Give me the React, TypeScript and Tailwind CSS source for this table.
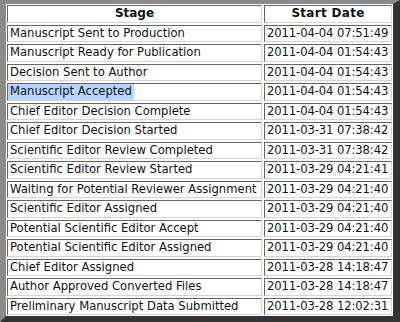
const rows: [string, string][] = [
  ["Manuscript Sent to Production", "2011-04-04 07:51:49"],
  ["Manuscript Ready for Publication", "2011-04-04 01:54:43"],
  ["Decision Sent to Author", "2011-04-04 01:54:43"],
  ["Manuscript Accepted", "2011-04-04 01:54:43"],
  ["Chief Editor Decision Complete", "2011-04-04 01:54:43"],
  ["Chief Editor Decision Started", "2011-03-31 07:38:42"],
  ["Scientific Editor Review Completed", "2011-03-31 07:38:42"],
  ["Scientific Editor Review Started", "2011-03-29 04:21:41"],
  ["Waiting for Potential Reviewer Assignment", "2011-03-29 04:21:40"],
  ["Scientific Editor Assigned", "2011-03-29 04:21:40"],
  ["Potential Scientific Editor Accept", "2011-03-29 04:21:40"],
  ["Potential Scientific Editor Assigned", "2011-03-29 04:21:40"],
  ["Chief Editor Assigned", "2011-03-28 14:18:47"],
  ["Author Approved Converted Files", "2011-03-28 14:18:47"],
  ["Preliminary Manuscript Data Submitted", "2011-03-28 12:02:31"],
];

const cell =
  "flex items-center px-[2px] border border-t-[#666] border-l-[#666] border-b-[#d4d4d4] border-r-[#d4d4d4] overflow-hidden whitespace-nowrap";

const App = () => {
  return (
    <div
      className="w-[400px] h-[322px] bg-white border-l-[6px] border-t-[4px] border-r-[7px] border-b-[6px] border-l-[#8a8a8a] border-t-[#8a8a8a] border-r-[#333] border-b-[#333] p-[1px] text-[11.6px] leading-[15px] text-[#111]"
      style={{ fontFamily: '"DejaVu Sans", Verdana, sans-serif' }}
    >
      <div className="grid grid-cols-[255px_1fr] grid-rows-[repeat(16,minmax(0,1fr))] gap-[2px] h-full">
        <div className={`${cell} justify-center font-bold text-[12px]`}>Stage</div>
        <div className={`${cell} justify-center font-bold text-[12px] tracking-[0.3px]`}>Start Date</div>
        {rows.map(([stage, date]) => (
          <div key={stage + date} className="contents">
            <div className={cell}>
              {stage === "Manuscript Accepted" ? (
                <span className="bg-[#b5d5ff] py-[2px] -mx-[2px] px-[2px]">{stage}</span>
              ) : (
                stage
              )}
            </div>
            <div className={`${cell} text-[11.6px] tracking-[-0.1px]`}>{date}</div>
          </div>
        ))}
      </div>
    </div>
  );
};

export default App;
